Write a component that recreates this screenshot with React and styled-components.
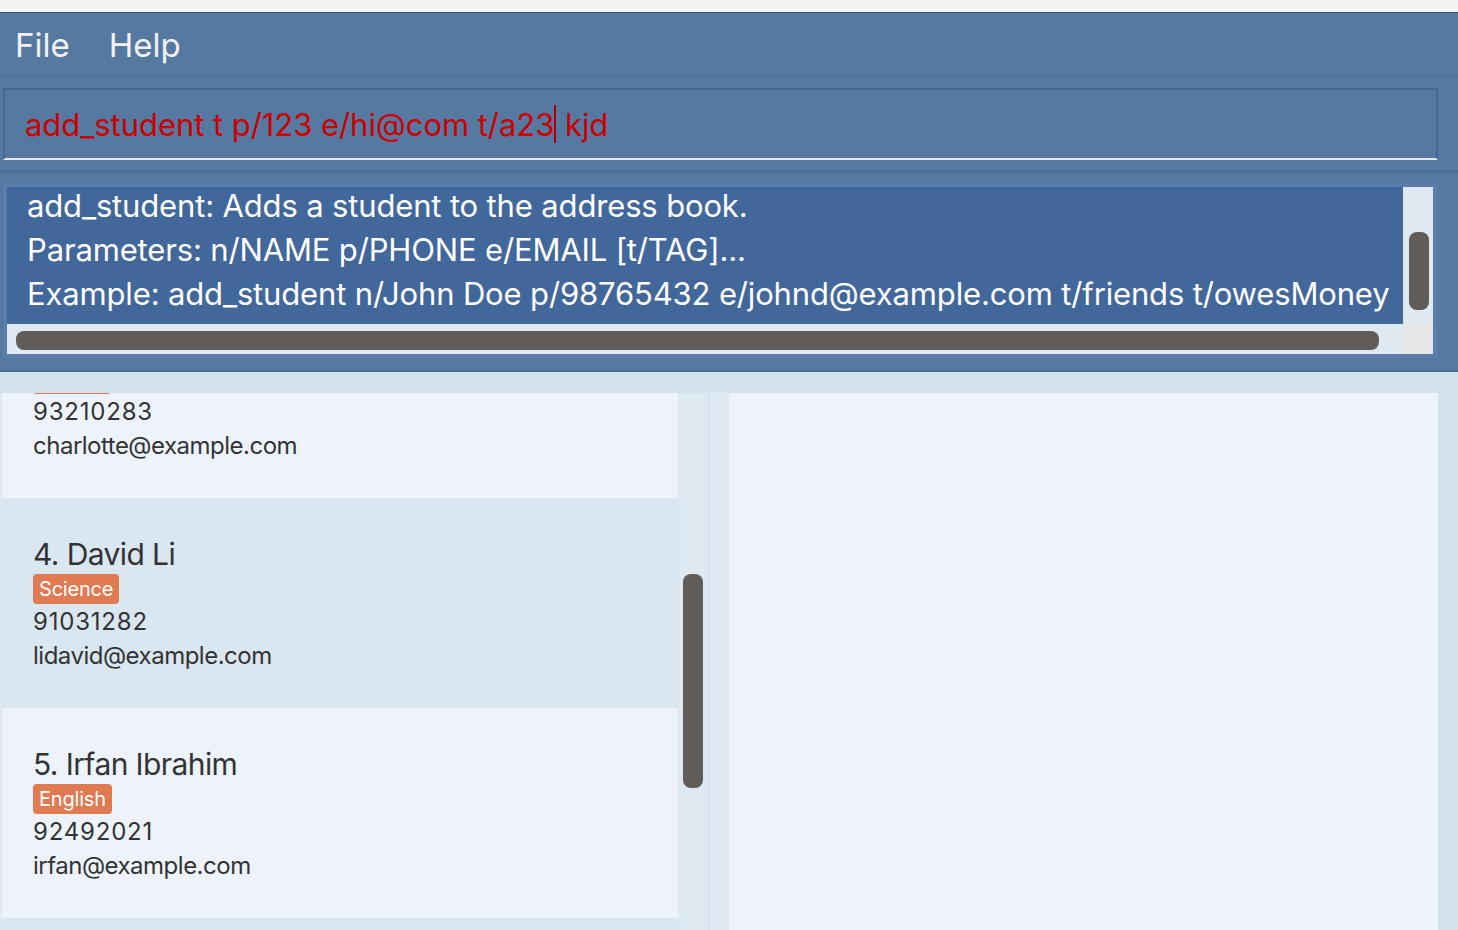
import { useLayoutEffect, useRef } from 'react'
import styled, { createGlobalStyle } from 'styled-components'

const GlobalStyle = createGlobalStyle`
  html, body {
    margin: 0;
    padding: 0;
    background: #d4e2ec;
    font-family: Inter, "Open Sans", sans-serif;
  }
`

const Window = styled.div`
  height: 930px;
  display: flex;
  flex-direction: column;
  overflow: hidden;
`
const TitleStrip = styled.div`
  height: 12px;
  background: #f4f4f4;
  border-bottom: 1px solid #2f5079;
`
const MenuBar = styled.div`
  height: 63px;
  background: #5679a2;
  border-bottom: 1px solid #4c6e98;
  display: flex;
  align-items: center;
  padding-left: 15px;
  gap: 39px;
`
const MenuItem = styled.span`
  color: #f2f2f2;
  font-size: 33px;
`
const CommandSection = styled.div`
  background: #5679a2;
  padding: 11px 20px 10px 3px;
  border-bottom: 3px solid #4c6e98;
`
const CommandBox = styled.div`
  height: 68px;
  border: 2px solid #476890;
  border-bottom-color: #dfe7ef;
  display: flex;
  align-items: center;
  padding-left: 20px;
  color: #cc0000;
  font-size: 31px;
  letter-spacing: -0.05px;
  white-space: pre;
`
const Caret = styled.span`
  display: inline-block;
  width: 0;
  height: 38px;
  border-left: 2px solid #b00000;
  vertical-align: middle;
`
const ResultSection = styled.div`
  background: #5679a2;
  height: 199px;
  box-sizing: border-box;
  padding: 10px 21px 12px 3px;
  border-bottom: 2px solid #4a6d9a;
`
const ResultFrame = styled.div`
  height: 100%;
  box-sizing: border-box;
  border: 4px solid #5a7ea9;
  display: grid;
  grid-template-columns: 1fr 30px;
  grid-template-rows: 1fr 30px;
`
const ResultText = styled.div`
  background: #42679a;
  color: #ffffff;
  font-size: 31px;
  letter-spacing: -0.15px;
  line-height: 44px;
  padding-left: 20px;
  white-space: pre;
  overflow: hidden;
`
const ResultLines = styled.div`
  margin-top: -3px;
`
const Track = styled.div`
  background: #dfe9f2;
  display: flex;
  flex-direction: ${p => (p.$vertical ? 'column' : 'row')};
  padding: ${p => p.$pad};
`
const Thumb = styled.div`
  background: #5f5c59;
  border-radius: 8px;
  width: ${p => p.$w};
  height: ${p => p.$h};
`
const Corner = styled.div`
  background: #e6e6e6;
`
const Main = styled.div`
  flex: 1;
  display: flex;
  padding-top: 20px;
  min-height: 0;
`
const ListPanel = styled.div`
  width: 706px;
  background: #dfe9f2;
  padding-left: 2px;
  display: flex;
  border-right: 2px solid #d6e3ee;
  margin-top: 1px;
`
const ListViewport = styled.div`
  width: 676px;
  overflow: hidden;
`
const ListTrack = styled.div`
  width: 30px;
  display: flex;
  justify-content: center;
  padding-top: 181px;
`
const Card = styled.div`
  height: 210px;
  box-sizing: border-box;
  padding: 38px 0 35px 31px;
  background: ${p => (p.$odd ? '#eef3fb' : '#dae6f0')};
  display: flex;
  flex-direction: column;
  align-items: flex-start;
  color: #333333;
`
const Name = styled.div`
  font-size: 30px;
  line-height: 36px;
  letter-spacing: -0.6px;
  margin-bottom: 2px;
`
const Tag = styled.span`
  height: 30px;
  line-height: 30px;
  padding: 0 6px;
  border-radius: 4px;
  background: #df7a52;
  color: #ffffff;
  font-size: 20px;
  letter-spacing: -0.2px;
  margin-bottom: 1px;
`
const Field = styled.div`
  font-size: 24px;
  line-height: 34px;
  letter-spacing: ${p => (p.$digits ? '0.8px' : '-0.5px')};
`
const DetailArea = styled.div`
  flex: 1;
  display: flex;
  padding: 0 20px 0 18px;
  background: linear-gradient(to right, #dfe9f2 18px, transparent 18px);
`
const DetailPanel = styled.div`
  flex: 1;
  background: #eef3fb;
  border-left: 2px solid #e3ecf5;
  margin-top: 1px;
`

const students = [
  { name: 'Alex Yeoh', tag: 'Math', phone: '87438807', email: 'alexyeoh@example.com' },
  { name: 'Bernice Yu', tag: 'Physics', phone: '99272758', email: 'berniceyu@example.com' },
  { name: 'Charlotte Oliveiro', tag: 'History', phone: '93210283', email: 'charlotte@example.com' },
  { name: 'David Li', tag: 'Science', phone: '91031282', email: 'lidavid@example.com' },
  { name: 'Irfan Ibrahim', tag: 'English', phone: '92492021', email: 'irfan@example.com' },
  { name: 'Roy Balakrishnan', tag: 'Chemistry', phone: '92624417', email: 'royb@example.com' },
]

const App = () => {
  const listRef = useRef(null)

  useLayoutEffect(() => {
    if (listRef.current) listRef.current.scrollTop = 525
  }, [])

  return (
    <Window>
      <GlobalStyle />
      <TitleStrip />
      <MenuBar>
        <MenuItem>File</MenuItem>
        <MenuItem>Help</MenuItem>
      </MenuBar>
      <CommandSection>
        <CommandBox>
          add_student t p/123 e/hi@com t/a23<Caret /> kjd
        </CommandBox>
      </CommandSection>
      <ResultSection>
        <ResultFrame>
          <ResultText>
            <ResultLines>
              {'add_student: Adds a student to the address book.\n'}
              {'Parameters: n/NAME p/PHONE e/EMAIL [t/TAG]...\n'}
              {'Example: add_student n/John Doe p/98765432 e/johnd@example.com t/friends t/owesMoney'}
            </ResultLines>
          </ResultText>
          <Track $vertical $pad="45px 4px 0 6px">
            <Thumb $w="20px" $h="78px" />
          </Track>
          <Track $pad="7px 0 4px 9px">
            <Thumb $w="1363px" $h="19px" />
          </Track>
          <Corner />
        </ResultFrame>
      </ResultSection>
      <Main>
        <ListPanel>
          <ListViewport ref={listRef}>
            {students.map((s, i) => (
              <Card key={s.name} $odd={i % 2 === 0}>
                <Name>{i + 1}. {s.name}</Name>
                <Tag>{s.tag}</Tag>
                <Field $digits>{s.phone}</Field>
                <Field>{s.email}</Field>
              </Card>
            ))}
          </ListViewport>
          <ListTrack>
            <Thumb $w="20px" $h="214px" />
          </ListTrack>
        </ListPanel>
        <DetailArea>
          <DetailPanel />
        </DetailArea>
      </Main>
    </Window>
  )
}

export default App
